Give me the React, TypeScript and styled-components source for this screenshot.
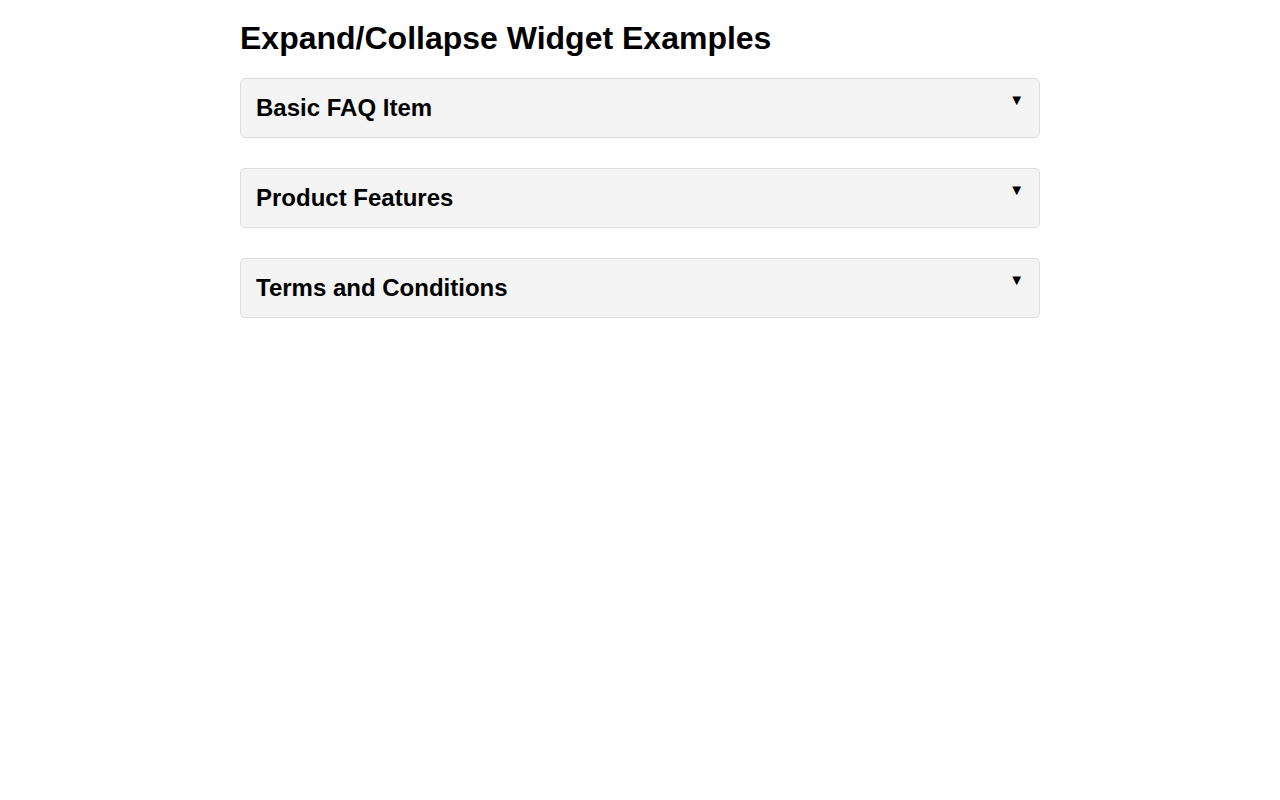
import styled, { createGlobalStyle } from "styled-components";

const GlobalStyle = createGlobalStyle`
  body {
    margin: 0;
    background: #fff;
    font-family: "Liberation Sans", Arial, sans-serif;
    color: #000;
  }
`;

const Page = styled.main`
  max-width: 800px;
  margin: 0 auto;
  padding-top: 20px;
`;

const Title = styled.h1`
  font-size: 32px;
  font-weight: 700;
  line-height: 37px;
  margin: 0 0 21px;
`;

const List = styled.div`
  display: flex;
  flex-direction: column;
  gap: 30px;
`;

const Item = styled.section`
  border: 1px solid #ddd;
  border-radius: 5px;
  background: #f4f4f4;
`;

const Header = styled.button`
  position: relative;
  display: block;
  width: 100%;
  border: 0;
  background: transparent;
  padding: 15px;
  text-align: left;
  font: inherit;
  color: inherit;
  cursor: pointer;
`;

const ItemTitle = styled.h2`
  margin: 0;
  font-size: 24px;
  font-weight: 700;
  line-height: 28px;
`;

const Arrow = styled.span`
  position: absolute;
  top: 12px;
  right: 15px;
  font-size: 15px;
  line-height: 17px;
`;

const items = ["Basic FAQ Item", "Product Features", "Terms and Conditions"];

export default function App() {
  return (
    <>
      <GlobalStyle />
      <Page>
        <Title>Expand/Collapse Widget Examples</Title>
        <List>
          {items.map((title) => (
            <Item key={title}>
              <Header type="button">
                <ItemTitle>{title}</ItemTitle>
                <Arrow>▼</Arrow>
              </Header>
            </Item>
          ))}
        </List>
      </Page>
    </>
  );
}
